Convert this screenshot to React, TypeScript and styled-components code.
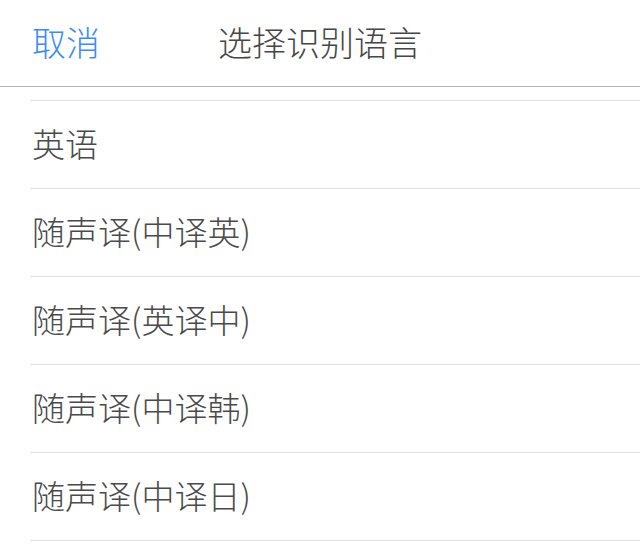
import styled, { createGlobalStyle } from "styled-components";

const languages = [
  "英语",
  "随声译(中译英)",
  "随声译(英译中)",
  "随声译(中译韩)",
  "随声译(中译日)",
];

const GlobalStyle = createGlobalStyle`
  html, body {
    margin: 0;
    padding: 0;
    background: #ffffff;
  }
  body {
    font-family: "Noto Sans CJK SC", "Noto Sans", sans-serif;
    font-weight: 300;
  }
`;

const App = () => {
  return (
    <Container>
      <GlobalStyle />
      <Header>
        <Cancel>取消</Cancel>
        <Title>选择识别语言</Title>
        <span />
      </Header>
      <List>
        {languages.map(name => (
          <Item key={name}>{name}</Item>
        ))}
      </List>
    </Container>
  );
};

const Container = styled.div`
  width: 640px;
  height: 560px;
  overflow: hidden;
  background: #ffffff;
`;
const Header = styled.div`
  height: 87px;
  box-sizing: border-box;
  display: grid;
  grid-template-columns: 1fr auto 1fr;
  align-items: center;
  padding: 0 32px 4px;
  border-bottom: 1px solid #b4b4b4;
`;
const Cancel = styled.span`
  font-size: 34px;
  color: #3d8cf5;
  justify-self: start;
`;
const Title = styled.span`
  font-size: 34px;
  color: #464646;
`;
const List = styled.div`
  margin: 13px 0 0 30px;
  border-bottom: 1px solid #e1e1e1;
`;
const Item = styled.div`
  height: 88px;
  box-sizing: border-box;
  display: flex;
  align-items: center;
  padding: 0 0 4px 2px;
  border-top: 1px solid #e1e1e1;
  font-size: 33px;
  color: #4a4a4a;
`;

export default App;
